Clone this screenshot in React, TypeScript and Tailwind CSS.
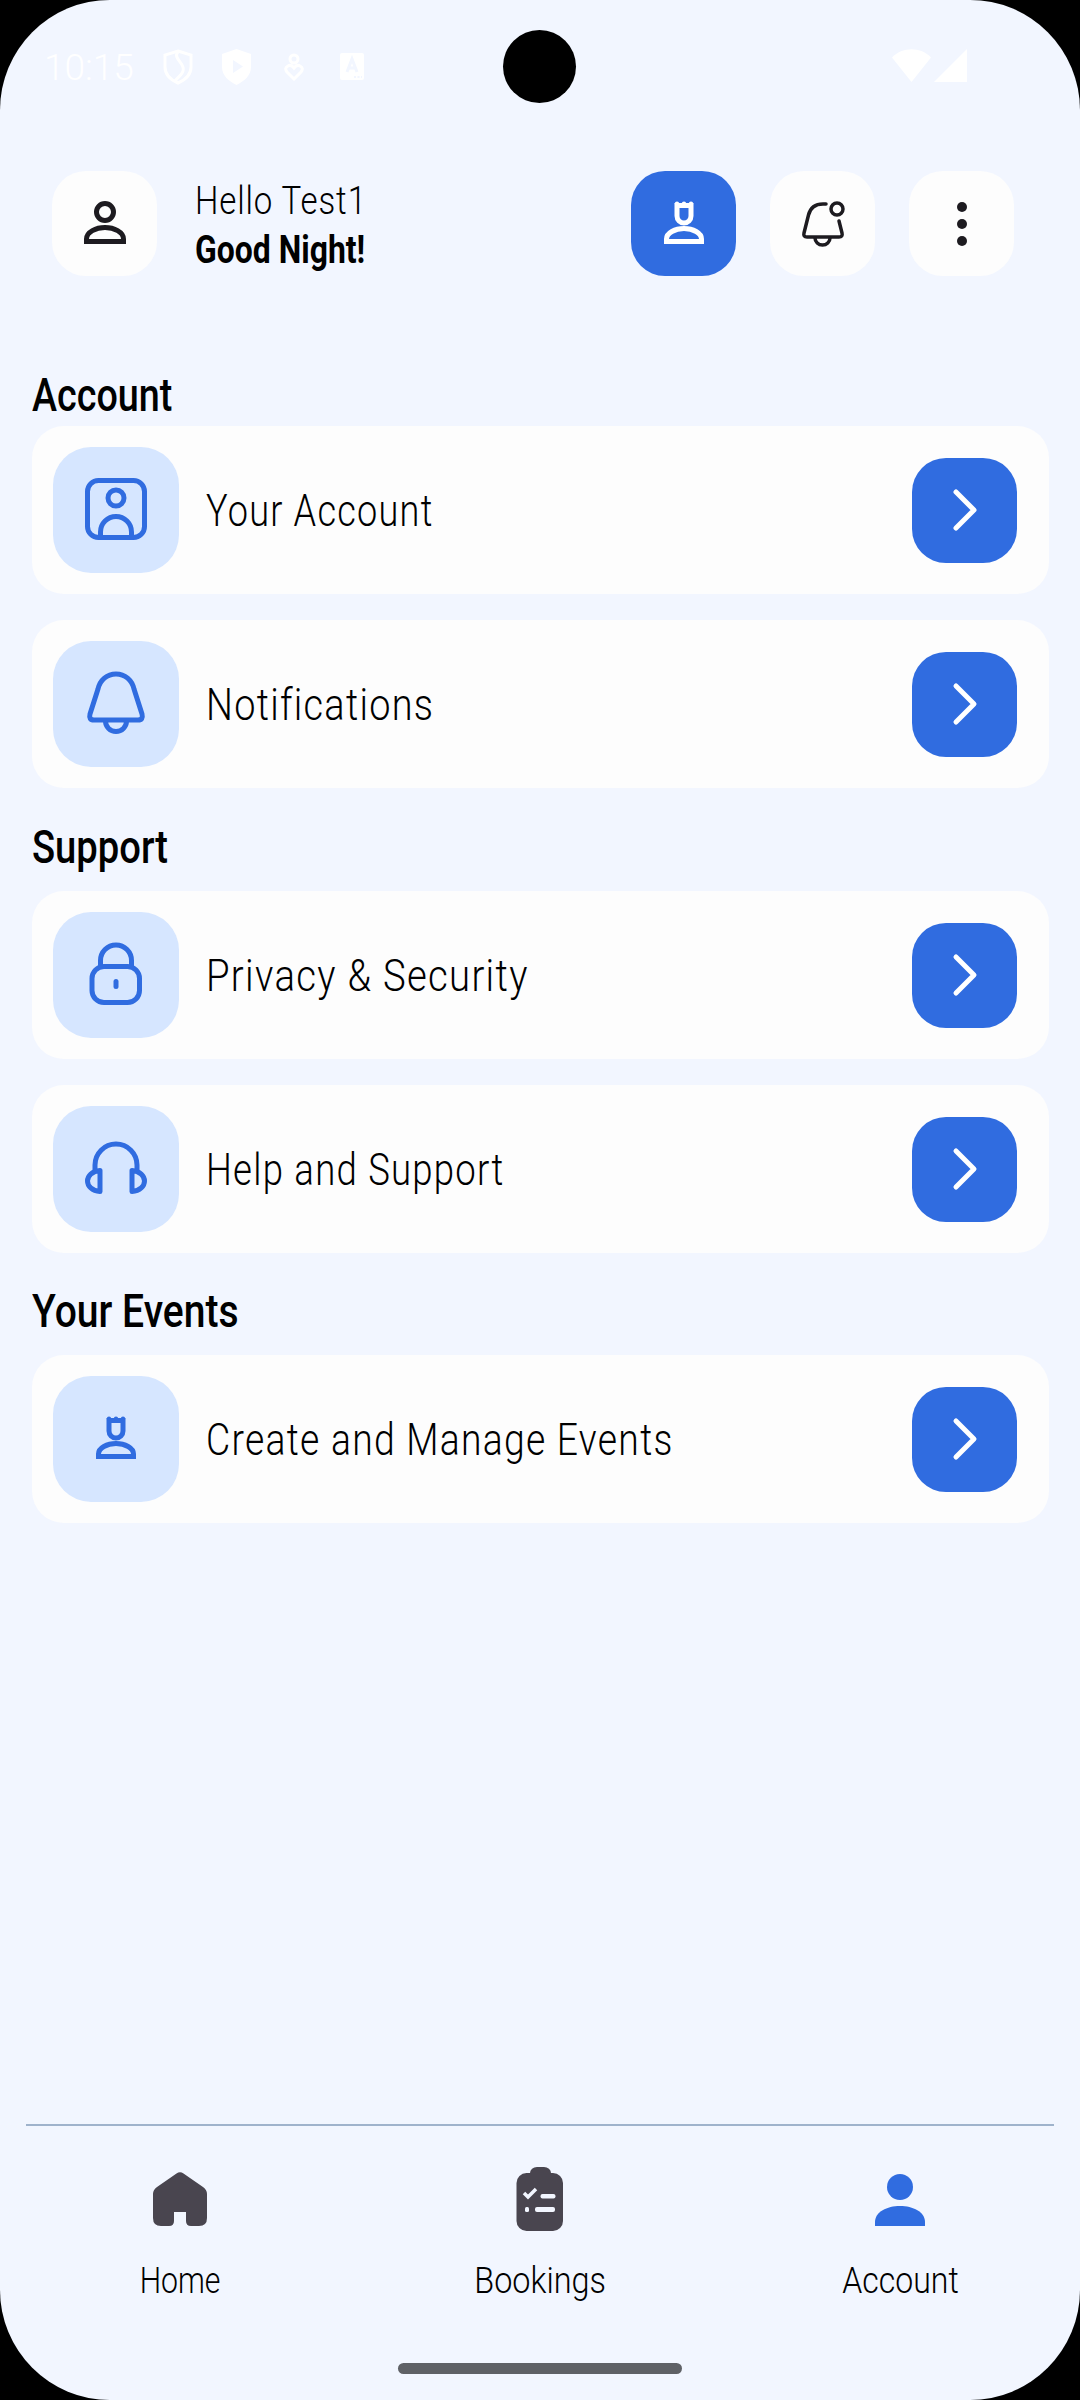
const font = "font-['Roboto',sans-serif]";

function PersonIcon() {
	return (
		<svg width="48" height="48" viewBox="0 0 48 48" fill="none" stroke="#1d1b20" strokeWidth="5">
			<circle cx="24" cy="12" r="8.5" />
			<path d="M5.5 41.5V39C5.5 32 15 27.5 24 27.5C33 27.5 42.5 32 42.5 39V41.5Z" />
		</svg>
	);
}

function BadgeIcon({ color }: { color: string }) {
	return (
		<svg width="48" height="48" viewBox="0 0 48 48" fill="none" stroke={color} strokeWidth="5">
			<path d="M17 5.5H31V16A7 7 0 0 1 17 16Z" />
			<circle cx="17" cy="3.8" r="2.2" fill={color} stroke="none" />
			<circle cx="24" cy="3.8" r="2.2" fill={color} stroke="none" />
			<circle cx="31" cy="3.8" r="2.2" fill={color} stroke="none" />
			<path d="M6.5 41.5V39C6.5 33 15 28.5 24 28.5C33 28.5 41.5 33 41.5 39V41.5Z" />
		</svg>
	);
}

function BellDotIcon() {
	return (
		<svg width="48" height="48" viewBox="0 0 48 48" fill="none" stroke="#1d1b20" strokeWidth="3.5" strokeLinecap="round">
			<path d="M27 4H24C15 4 11 9 9.5 15L5 33Q4 37 8 37H40Q44 37 43 33L40 21" />
			<path d="M16 38A7.5 7 0 0 0 31 38" />
			<circle cx="38" cy="9" r="6" />
		</svg>
	);
}

function AccountIcon() {
	return (
		<svg width="72" height="72" viewBox="0 0 72 72" fill="none" stroke="#306ce0" strokeWidth="5">
			<rect x="7.5" y="6.5" width="57" height="57" rx="11" />
			<circle cx="36" cy="24" r="8" />
			<path d="M20.5 62V58A15.5 15.5 0 0 1 51.5 58V62" />
		</svg>
	);
}

function BellIcon() {
	return (
		<svg width="72" height="72" viewBox="0 0 72 72" fill="none" stroke="#306ce0" strokeWidth="5" strokeLinejoin="round">
			<path d="M36 6C27 6 20 12 18 21L10 46Q8.5 52 14 52H58Q63.5 52 62 46L54 21C52 12 45 6 36 6Z" />
			<path d="M25.5 53A10.5 10.5 0 0 0 46.5 53" />
		</svg>
	);
}

function LockIcon() {
	return (
		<svg width="72" height="72" viewBox="0 0 72 72" fill="none" stroke="#306ce0" strokeWidth="5">
			<rect x="12" y="27.5" width="47.5" height="36" rx="12" />
			<path d="M20.5 27V21.5A15.5 15.5 0 0 1 51.5 21.5V27" />
			<rect x="33.5" y="40" width="5" height="10" rx="2.5" fill="#306ce0" stroke="none" />
		</svg>
	);
}

function HeadsetIcon() {
	return (
		<svg width="72" height="72" viewBox="0 0 72 72" fill="none" stroke="#306ce0" strokeWidth="5" strokeLinejoin="round">
			<path d="M15 38V32A21 21 0 0 1 57 32V38" />
			<path d="M20 37.5C12 38 7.5 43 7.5 48C7.5 53 12 58 20 58.5Z" />
			<path d="M52 37.5C60 38 64.5 43 64.5 48C64.5 53 60 58 52 58.5Z" />
		</svg>
	);
}

function HomeIcon() {
	return (
		<svg width="60" height="60" viewBox="0 0 60 60" fill="#49454f">
			<path d="M26.5 4.5Q30 2 33.5 4.5L53 18Q57 21 57 25V49Q57 57 49 57H41Q36 57 36 52V43H24V52Q24 57 19 57H11Q3 57 3 49V25Q3 21 7 18Z" />
		</svg>
	);
}

function BookingsIcon() {
	return (
		<svg width="60" height="70" viewBox="0 0 60 70">
			<rect x="20" y="3" width="21" height="12" rx="7" fill="#49454f" />
			<rect x="6.5" y="9" width="46.5" height="58" rx="10" fill="#49454f" />
			<path d="M14 29L18 33L26 25" fill="none" stroke="#f2f6ff" strokeWidth="3.5" />
			<rect x="30.5" y="30" width="15" height="4.5" rx="2" fill="#f2f6ff" />
			<rect x="15" y="43" width="4" height="5" rx="1.5" fill="#f2f6ff" />
			<rect x="25" y="43" width="20" height="5" rx="2" fill="#f2f6ff" />
		</svg>
	);
}

function AccountFilledIcon() {
	return (
		<svg width="60" height="60" viewBox="0 0 60 60" fill="#306ce0">
			<circle cx="30" cy="18" r="13" />
			<path d="M5 57V53C5 43 17 37 30 37C43 37 55 43 55 53V57Z" />
		</svg>
	);
}

function StatusBar() {
	return (
		<div className="flex h-[171px] shrink-0 items-start pl-[44px] pr-[113px] pt-[49px] text-white">
			<span className="text-[37px] font-light leading-[38px]">10:15</span>
			<svg width="30" height="36" viewBox="0 0 30 36" fill="none" stroke="white" strokeWidth="3" className="ml-[29px]">
				<path d="M15 2L28 6V18C28 26 22 31 15 34C8 31 2 26 2 18V6Z" />
				<path d="M15 3C9 9 23 15 20 22C19 26 15 28 12 32" />
			</svg>
			<svg width="29" height="36" viewBox="0 0 29 36" fill="white" className="ml-[29px]">
				<path fillRule="evenodd" d="M14.5 0L29 5V18C29 27 22 32 14.5 36C7 32 0 27 0 18V5ZM11 11V24L21 17.5Z" />
			</svg>
			<svg width="20" height="28" viewBox="0 0 20 28" fill="none" stroke="white" strokeWidth="3" className="ml-[33px] mt-[4px]">
				<circle cx="10" cy="6" r="4" />
				<path d="M10 26L3 19Q0 15 4 13Q7 11 10 15Q13 11 16 13Q20 15 17 19Z" />
			</svg>
			<svg width="24" height="27" viewBox="0 0 24 27" className="ml-[36px] mt-[4px]">
				<rect width="24" height="27" rx="2" fill="white" />
				<path d="M7 19L12 6L17 19M9 15H15" fill="none" stroke="#f2f6ff" strokeWidth="3" />
				<path d="M14 24H22" stroke="#f2f6ff" strokeWidth="2" strokeDasharray="2 1.5" />
			</svg>
			<svg width="75" height="33" viewBox="0 0 75 33" fill="white" className="ml-auto">
				<path d="M0 8.5C10 -2.5 29 -2.5 39 8.5L19.5 33Z" />
				<path d="M42 33L75 0V33Z" />
			</svg>
		</div>
	);
}

function Tile({ children, blue }: { children: React.ReactNode; blue?: boolean }) {
	return (
		<div className={`flex h-[105px] w-[105px] shrink-0 items-center justify-center rounded-[34px] ${blue ? "bg-[#306ce0]" : "bg-[#fdfdfd]"}`}>
			{children}
		</div>
	);
}

function Header() {
	return (
		<div className="flex h-[105px] shrink-0 items-center pl-[52px] pr-[66px]">
			<Tile>
				<PersonIcon />
			</Tile>
			<div className="ml-[38px] mt-[4px] flex flex-col gap-[3px] text-black">
				<span className="origin-left scale-x-[0.87] whitespace-nowrap text-[38px] font-light leading-[46px] tracking-[1px]">Hello Test1</span>
				<span className="origin-left scale-x-[0.84] whitespace-nowrap text-[38px] font-bold leading-[46px]">Good Night!</span>
			</div>
			<div className="ml-auto flex gap-[34px]">
				<Tile blue>
					<BadgeIcon color="white" />
				</Tile>
				<Tile>
					<BellDotIcon />
				</Tile>
				<Tile>
					<div className="flex flex-col gap-[7px]">
						<span className="h-[10px] w-[10px] rounded-full bg-[#1d1b20]" />
						<span className="h-[10px] w-[10px] rounded-full bg-[#1d1b20]" />
						<span className="h-[10px] w-[10px] rounded-full bg-[#1d1b20]" />
					</div>
				</Tile>
			</div>
		</div>
	);
}

function Row({ icon, label, squeeze }: { icon: React.ReactNode; label: string; squeeze: string }) {
	return (
		<div className="flex h-[168px] items-center rounded-[32px] bg-[#fdfdfd] pl-[21px] pr-[32px]">
			<div className="flex h-[126px] w-[126px] shrink-0 items-center justify-center rounded-[38px] bg-[#d6e6ff]">{icon}</div>
			<span className={`ml-[27px] mt-[2px] origin-left whitespace-nowrap text-[44px] font-light tracking-[1.5px] text-black ${squeeze}`}>{label}</span>
			<div className="ml-auto flex h-[105px] w-[105px] items-center justify-center rounded-[34px] bg-[#306ce0]">
				<svg width="36" height="48" viewBox="0 0 36 48" fill="none" stroke="white" strokeWidth="5" strokeLinecap="round" strokeLinejoin="round">
					<path d="M9 6L27 24L9 42" />
				</svg>
			</div>
		</div>
	);
}

function SectionLabel({ children, squeeze }: { children: React.ReactNode; squeeze: string }) {
	return <h2 className={`origin-left whitespace-nowrap text-[46px] font-medium leading-[50px] text-black ${squeeze}`}>{children}</h2>;
}

function NavItem({ icon, label, squeeze }: { icon: React.ReactNode; label: string; squeeze: string }) {
	return (
		<div className="flex w-[360px] flex-col items-center">
			<div className="flex h-[70px] items-center justify-center">{icon}</div>
			<span className={`mt-[25px] text-[36px] font-light leading-[44px] text-black ${squeeze}`}>{label}</span>
		</div>
	);
}

export default function App() {
	return (
		<div className="h-[2400px] w-[1080px] bg-black">
			<div className={`relative flex h-[2400px] w-[1080px] flex-col overflow-hidden rounded-[110px] bg-[#f2f6ff] ${font}`}>
				<div className="absolute left-[503px] top-[30px] h-[73px] w-[73px] rounded-full bg-black" />
				<StatusBar />
				<Header />
				<div className="ml-[32px] mr-[31px] mt-[94px] flex flex-col">
					<SectionLabel squeeze="scale-x-[0.82]">Account</SectionLabel>
					<div className="mt-[6px] flex flex-col gap-[26px]">
						<Row icon={<AccountIcon />} label="Your Account" squeeze="scale-x-[0.82]" />
						<Row icon={<BellIcon />} label="Notifications" squeeze="scale-x-[0.86]" />
					</div>
					<div className="mt-[34px]">
						<SectionLabel squeeze="scale-x-[0.83]">Support</SectionLabel>
					</div>
					<div className="mt-[19px] flex flex-col gap-[26px]">
						<Row icon={<LockIcon />} label="Privacy & Security" squeeze="scale-x-[0.87]" />
						<Row icon={<HeadsetIcon />} label="Help and Support" squeeze="scale-x-[0.83]" />
					</div>
					<div className="mt-[33px]">
						<SectionLabel squeeze="scale-x-[0.85]">Your Events</SectionLabel>
					</div>
					<div className="mt-[19px]">
						<Row icon={<BadgeIcon color="#306ce0" />} label="Create and Manage Events" squeeze="scale-x-[0.847]" />
					</div>
				</div>
				<div className="mt-auto flex flex-col">
					<div className="mx-[26px] h-[2px] bg-[#9fb3cc]" />
					<div className="mt-[38px] flex">
						<NavItem icon={<HomeIcon />} label="Home" squeeze="scale-x-[0.84]" />
						<NavItem icon={<BookingsIcon />} label="Bookings" squeeze="scale-x-[0.9]" />
						<NavItem icon={<AccountFilledIcon />} label="Account" squeeze="scale-x-[0.89]" />
					</div>
					<div className="mx-auto mb-[26px] mt-[60px] h-[11px] w-[284px] rounded-full bg-[#5f6166]" />
				</div>
			</div>
		</div>
	);
}
